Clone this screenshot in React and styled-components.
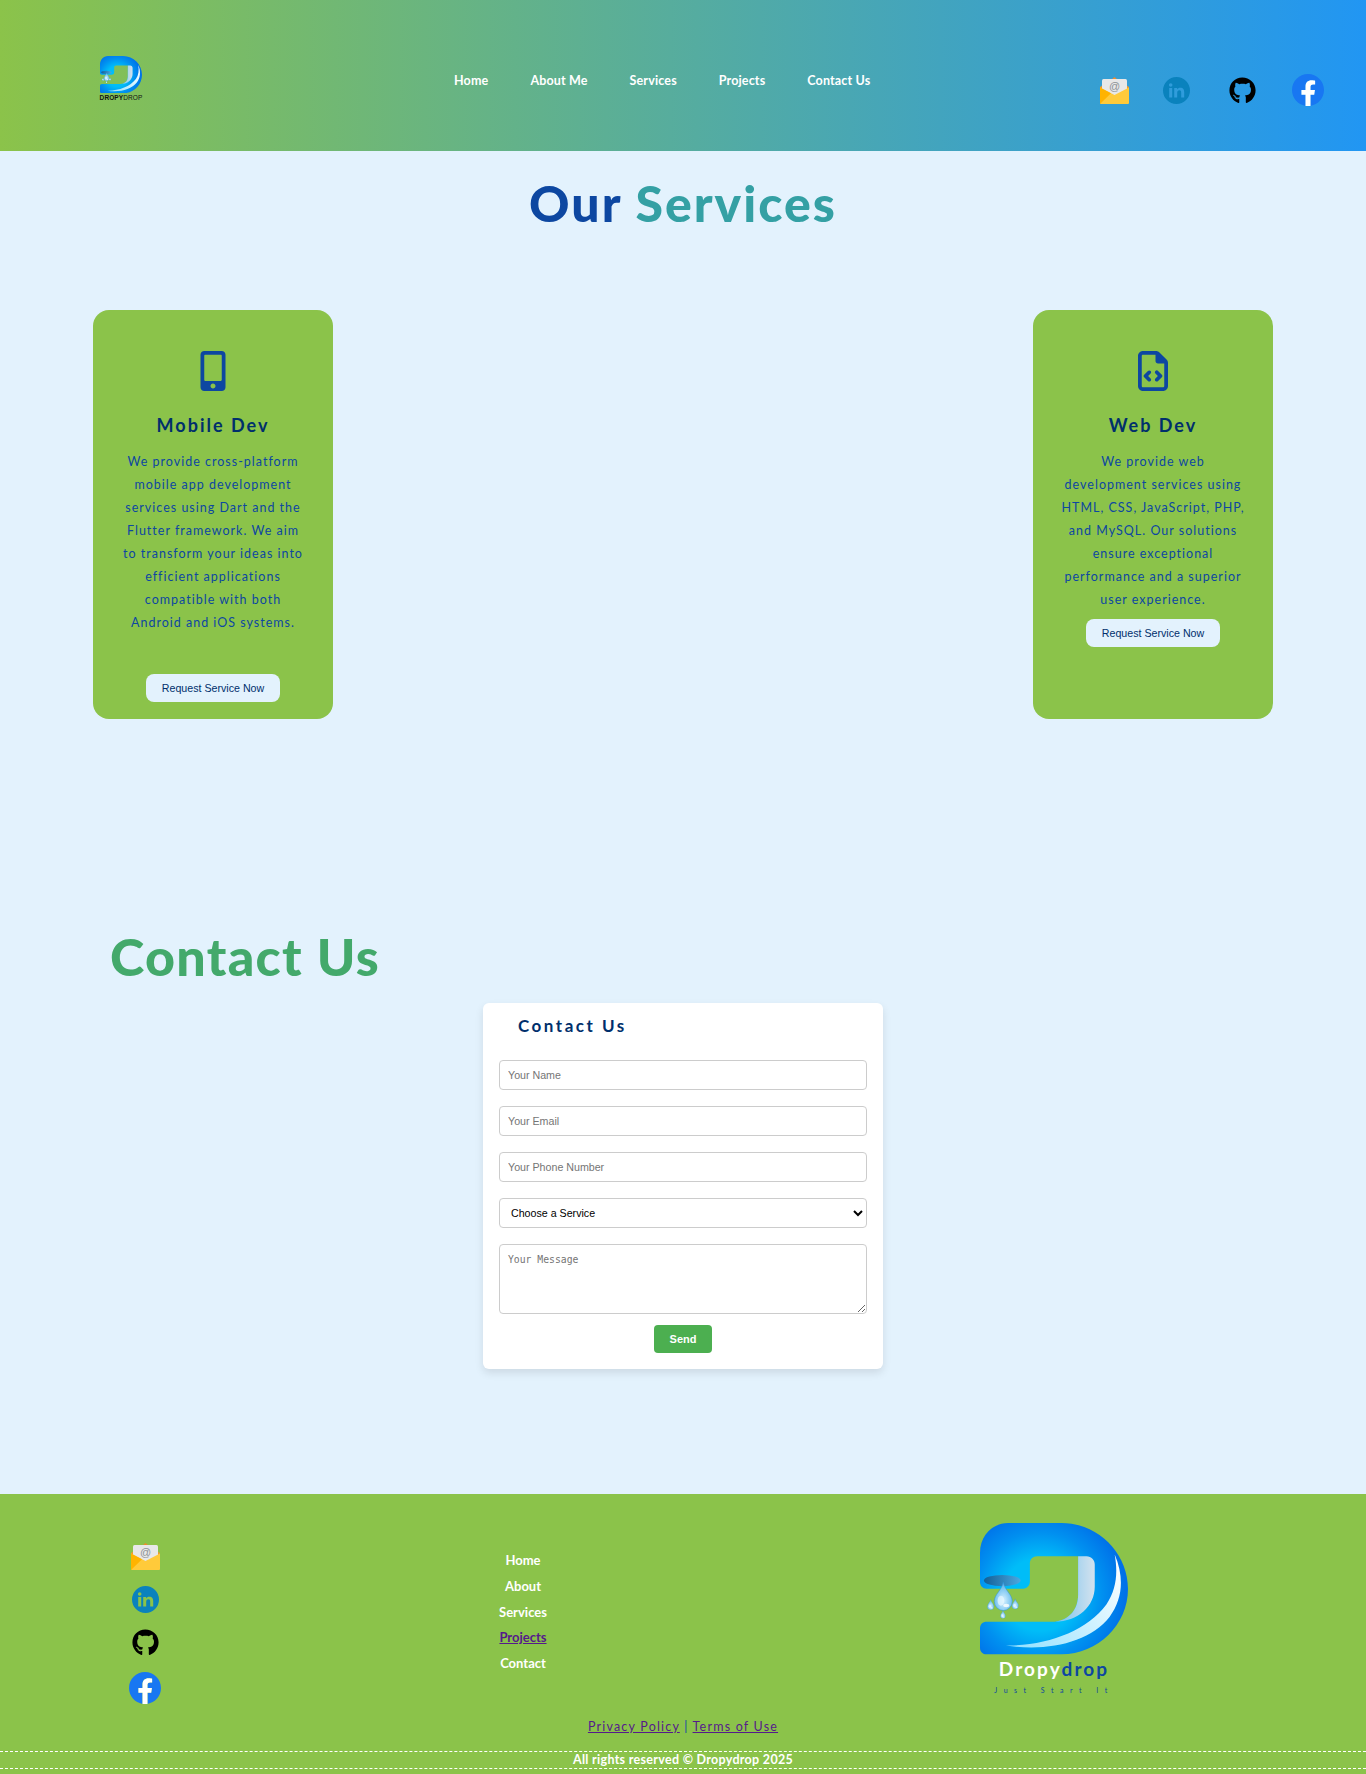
import React from 'react'
import styled, { createGlobalStyle } from 'styled-components'
import { FaGithub, FaMobileAlt } from 'react-icons/fa'
import { FaRegFileCode } from 'react-icons/fa6'

const GlobalStyle = createGlobalStyle`
  body {
    margin: 0;
    background: #e3f2fd;
    font-family: Lato, "Open Sans", sans-serif;
  }
  * { box-sizing: border-box; }
`

const MailIcon = () => (
  <svg width="29" height="27" viewBox="0 0 29 27">
    <path d="M14.5 0l3 2.5h-6z" fill="#ef8a2e" />
    <path d="M0 10l3-2h23l3 2v16H0z" fill="#ef9a2e" />
    <rect x="2" y="2" width="25" height="18" rx="1.5" fill="#e8e8e8" />
    <text x="14.5" y="13" textAnchor="middle" fontSize="11" fill="#8d9296" fontFamily="Liberation Sans">@</text>
    <path d="M0 10.5l14.5 7.5 14.5-7.5V26a1 1 0 0 1-1 1H1a1 1 0 0 1-1-1z" fill="#ffca3a" />
    <path d="M0 10.5l11 5.7L0 27z" fill="#ffb300" />
  </svg>
)

const LinkedinIcon = () => (
  <svg width="27" height="27" viewBox="0 0 27 27">
    <path
      fillRule="evenodd"
      fill="#0a82bd"
      d="M13.5 0a13.5 13.5 0 1 0 0 27 13.5 13.5 0 0 0 0-27zM6.2 11h3v9.5h-3zM7.7 6.2a1.8 1.8 0 1 1 0 3.6 1.8 1.8 0 0 1 0-3.6zM11.2 11h2.9v1.4c.6-1 1.7-1.7 3.2-1.7 3 0 3.9 1.9 3.9 4.6v5.2h-3v-4.6c0-1.4-.3-2.6-1.8-2.6s-2.2 1.1-2.2 2.6v4.6h-3z"
    />
  </svg>
)

const FacebookIcon = () => (
  <svg width="32" height="32" viewBox="0 0 24 24">
    <path fill="#1877f2" d="M24 12.073c0-6.627-5.373-12-12-12s-12 5.373-12 12c0 5.99 4.388 10.954 10.125 11.854v-8.385H7.078v-3.47h3.047V9.43c0-3.007 1.792-4.669 4.533-4.669 1.312 0 2.686.235 2.686.235v2.953H15.83c-1.491 0-1.956.925-1.956 1.874v2.25h3.328l-.532 3.47h-2.796v8.385C19.612 23.027 24 18.062 24 12.073z" />
    <path fill="#fff" d="M16.671 15.543l.532-3.47h-3.328v-2.25c0-.949.465-1.874 1.956-1.874h1.513V4.996s-1.374-.235-2.686-.235c-2.741 0-4.533 1.662-4.533 4.669v2.642H7.078v3.47h3.047v8.385a12.1 12.1 0 003.75 0v-8.385z" />
  </svg>
)

const Drop = ({ x, y, s }) => (
  <g transform={`translate(${x} ${y}) scale(${s})`}>
    <path d="M0-50C4-26 27-14 27 8a27 27 0 0 1-54 0C-27-14-4-26 0-50z" fill="url(#dropFill)" stroke="#2f93d8" strokeWidth="1.5" />
    <ellipse cx="-7" cy="6" rx="10" ry="15" fill="#e6f7ff" opacity="0.75" />
    <ellipse cx="9" cy="20" rx="9" ry="5" fill="#fff" opacity="0.8" />
  </g>
)

const LogoMark = ({ width }) => (
  <svg width={width} viewBox="120 70 445 396">
    <defs>
      <radialGradient id="logoFill" cx="300" cy="285" r="260" gradientUnits="userSpaceOnUse">
        <stop offset="0.42" stopColor="#00bdf8" />
        <stop offset="0.72" stopColor="#0090f0" />
        <stop offset="1" stopColor="#0070e8" />
      </radialGradient>
      <linearGradient id="panelFill" x1="350" y1="0" x2="465" y2="0" gradientUnits="userSpaceOnUse">
        <stop offset="0" stopColor="#78c4ee" />
        <stop offset="1" stopColor="#d4e2ee" />
      </linearGradient>
      <linearGradient id="shineFill" x1="200" y1="440" x2="530" y2="170" gradientUnits="userSpaceOnUse">
        <stop offset="0" stopColor="#8fe0ff" />
        <stop offset="1" stopColor="#ffffff" />
      </linearGradient>
      <linearGradient id="capFill" x1="132" y1="0" x2="242" y2="0" gradientUnits="userSpaceOnUse">
        <stop offset="0" stopColor="#135f96" />
        <stop offset="1" stopColor="#4aa8e0" />
      </linearGradient>
      <radialGradient id="dropFill" cx="0.5" cy="0.65" r="0.6">
        <stop offset="0" stopColor="#d8f2ff" />
        <stop offset="1" stopColor="#58b4ec" />
      </radialGradient>
    </defs>
    <path
      fill="url(#logoFill)"
      d="M120 160C120 110 155 70 205 70H365C475 70 565 160 565 268S475 465 365 465H140C128 465 120 457 120 445V387C120 375 128 367 140 367H335C385 367 415 335 415 285V170H292C279 170 270 179 270 192V245C270 259 260 268 247 268H140C128 268 120 259 120 247z"
    />
    <path fill="url(#panelFill)" d="M415 170H440C455 170 465 181 465 195V262C465 320 415 367 345 367C390 360 415 330 415 285z" />
    <path fill="url(#shineFill)" d="M525 165C555 235 548 300 510 352C450 430 320 458 198 438C320 440 440 395 500 315C530 270 535 220 525 165z" />
    <ellipse cx="187" cy="243" rx="55" ry="17" fill="url(#capFill)" />
    <Drop x={190} y={298} s={1} />
    <Drop x={152} y={318} s={0.36} />
    <Drop x={226} y={316} s={0.36} />
    <Drop x={189} y={347} s={0.28} />
  </svg>
)

const Contact = () => {
  return (
    <ContactSection>
      <ContactHeading>Contact Us</ContactHeading>
      <ContactForm onSubmit={(e) => e.preventDefault()}>
        <FormTitle>Contact Us</FormTitle>
        <Field type="text" placeholder="Your Name" />
        <Field type="email" placeholder="Your Email" />
        <Field type="tel" placeholder="Your Phone Number" />
        <ServiceSelect defaultValue="">
          <option value="">Choose a Service</option>
          <option value="mobile">Mobile Dev</option>
          <option value="web">Web Dev</option>
        </ServiceSelect>
        <Message placeholder="Your Message" />
        <SendButton type="submit">Send</SendButton>
      </ContactForm>
    </ContactSection>
  )
}

const App = () => {
  return (
    <>
      <GlobalStyle />
      <Header>
        <HeaderLogo>
          <LogoMark width={42} />
          <HeaderLogoText>DROPY<span>DROP</span></HeaderLogoText>
        </HeaderLogo>
        <Nav>
          <NavLink href="#home">Home</NavLink>
          <NavLink href="#about">About Me</NavLink>
          <NavLink href="#services">Services</NavLink>
          <NavLink href="#projects">Projects</NavLink>
          <NavLink href="#contact">Contact Us</NavLink>
        </Nav>
        <HeaderSocials>
          <HeaderSocial href="#mail"><MailIcon /></HeaderSocial>
          <HeaderSocial href="#linkedin" $left={34}><LinkedinIcon /></HeaderSocial>
          <HeaderSocial href="#github" $left={39}><FaGithub size={27} color="#000" /></HeaderSocial>
          <HeaderSocial href="#facebook" $left={36}><FacebookIcon /></HeaderSocial>
        </HeaderSocials>
      </Header>

      <Services>
        <ServicesHeading>Our <span>Services</span></ServicesHeading>
        <CardRow>
          <Card>
            <CardIcon><FaMobileAlt size={40} /></CardIcon>
            <CardTitle>Mobile Dev</CardTitle>
            <CardText>
              We provide cross-platform<br />
              mobile app development<br />
              services using Dart and the<br />
              Flutter framework. We aim<br />
              to transform your ideas into<br />
              efficient applications<br />
              compatible with both<br />
              Android and iOS systems.
            </CardText>
            <RequestButton $top={40}>Request Service Now</RequestButton>
          </Card>
          <Card>
            <CardIcon><FaRegFileCode size={40} /></CardIcon>
            <CardTitle>Web Dev</CardTitle>
            <CardText>
              We provide web<br />
              development services using<br />
              HTML, CSS, JavaScript, PHP,<br />
              and MySQL. Our solutions<br />
              ensure exceptional<br />
              performance and a superior<br />
              user experience.
            </CardText>
            <RequestButton $top={8}>Request Service Now</RequestButton>
          </Card>
        </CardRow>
      </Services>

      <Contact />

      <Footer>
        <FooterTop>
          <FooterSocials>
            <FooterSocial href="#mail"><MailIcon /></FooterSocial>
            <FooterSocial href="#linkedin"><LinkedinIcon /></FooterSocial>
            <FooterSocial href="#github"><FaGithub size={27} color="#000" /></FooterSocial>
            <FooterSocial href="#facebook"><FacebookIcon /></FooterSocial>
          </FooterSocials>
          <FooterNav>
            <FooterLink href="#home">Home</FooterLink>
            <FooterLink href="#about">About</FooterLink>
            <FooterLink href="#services">Services</FooterLink>
            <FooterLink href="#projects" $visited>Projects</FooterLink>
            <FooterLink href="#contact">Contact</FooterLink>
          </FooterNav>
          <FooterLogo>
            <LogoMark width={148} />
            <Brand>Dropy<span>drop</span></Brand>
            <Tagline>Just Start It</Tagline>
          </FooterLogo>
        </FooterTop>
        <Legal>
          <LegalLink href="#privacy">Privacy Policy</LegalLink> | <LegalLink href="#terms">Terms of Use</LegalLink>
        </Legal>
        <Copyright>All rights reserved © Dropydrop 2025</Copyright>
      </Footer>
    </>
  )
}

const Header = styled.header`
  height: 151px;
  display: flex;
  background: linear-gradient(90deg, #8bc34a, #2196f3);
  padding: 0 42px 0 99px;
`
const HeaderLogo = styled.div`
  width: 44px;
  padding-top: 56px;
  display: flex;
  flex-direction: column;
  align-items: center;
  svg { display: block; }
`
const HeaderLogoText = styled.div`
  margin-top: 1px;
  font: 700 6.5px/8px "Liberation Sans", sans-serif;
  letter-spacing: 0.1px;
  color: #111;
  span { font-weight: 400; }
`
const Nav = styled.nav`
  display: flex;
  gap: 42px;
  margin-left: 311px;
  padding-top: 72px;
`
const NavLink = styled.a`
  font-size: 12.5px;
  line-height: 18px;
  font-weight: 700;
  letter-spacing: 0.15px;
  color: #fff;
  text-decoration: none;
`
const HeaderSocials = styled.div`
  display: flex;
  margin-left: auto;
  align-items: center;
  height: 32px;
  margin-top: 74px;
`
const HeaderSocial = styled.a`
  display: flex;
  margin-left: ${(p) => p.$left || 0}px;
  svg { display: block; }
`
const Services = styled.section`
  padding-top: 19px;
`
const ServicesHeading = styled.h1`
  margin: 0;
  text-align: center;
  font-size: 50px;
  line-height: 66px;
  font-weight: 900;
  letter-spacing: 2px;
  color: #0d47a1;
  span { color: #34a0a4; }
`
const CardRow = styled.div`
  display: flex;
  justify-content: space-between;
  margin-top: 74px;
  padding: 0 93px;
`
const Card = styled.article`
  width: 240px;
  height: 409px;
  padding-top: 41px;
  border-radius: 16px;
  background: #8bc34a;
  display: flex;
  flex-direction: column;
  align-items: center;
  text-align: center;
`
const CardIcon = styled.div`
  height: 40px;
  color: #0d47a1;
  svg { display: block; }
`
const CardTitle = styled.h3`
  margin: 21px 0 0;
  font-size: 18px;
  line-height: 26px;
  font-weight: 700;
  letter-spacing: 2px;
  color: #002f6c;
`
const CardText = styled.p`
  margin: 12px 0 0;
  font-size: 12.5px;
  line-height: 23px;
  letter-spacing: 1px;
  white-space: nowrap;
  color: #0d47a1;
`
const RequestButton = styled.button`
  margin-top: ${(p) => p.$top}px;
  width: 134px;
  height: 28px;
  padding: 0;
  border: none;
  border-radius: 8px;
  background: #e3f2fd;
  color: #002f6c;
  font: 10.67px "Liberation Sans", Arial, sans-serif;
`
const ContactSection = styled.section`
  margin-top: 204px;
`
const ContactHeading = styled.h1`
  margin: 0;
  padding-left: 110px;
  font-size: 52px;
  line-height: 66px;
  font-weight: 900;
  letter-spacing: 1.3px;
  color: #43a96b;
`
const ContactForm = styled.form`
  width: 400px;
  margin: 14px auto 0;
  padding: 11px 16px 16px;
  background: #fff;
  border-radius: 6px;
  box-shadow: 0 4px 8px rgba(0, 0, 0, 0.1);
  display: flex;
  flex-direction: column;
`
const FormTitle = styled.h3`
  margin: 0 0 22px;
  padding-left: 19px;
  font-size: 17px;
  line-height: 24px;
  font-weight: 700;
  letter-spacing: 2.5px;
  color: #002f6c;
`
const Field = styled.input`
  height: 30px;
  margin-bottom: 16px;
  padding: 0 8px;
  border: 1px solid #ccc;
  border-radius: 4px;
  font: 10.67px "Liberation Sans", Arial, sans-serif;
  background: #fff;
`
const ServiceSelect = styled.select`
  height: 30px;
  margin-bottom: 16px;
  padding: 0 0 0 7px;
  border: 1px solid #ccc;
  border-radius: 4px;
  background: #fff;
  color: #000;
  font: 10.67px "Liberation Sans", Arial, sans-serif;
`
const Message = styled.textarea`
  height: 70px;
  padding: 9px 8px;
  border: 1px solid #ccc;
  border-radius: 4px;
  font: 9.75px "DejaVu Sans Mono", "Liberation Mono", monospace;
`
const SendButton = styled.button`
  align-self: center;
  width: 58px;
  height: 28px;
  margin-top: 11px;
  padding: 0;
  border: none;
  border-radius: 4px;
  background: #4caf50;
  color: #fff;
  font: 700 11px "Liberation Sans", Arial, sans-serif;
`
const Footer = styled.footer`
  margin-top: 125px;
  height: 280px;
  padding-top: 29px;
  background: #8bc34a;
`
const FooterTop = styled.div`
  height: 172px;
  display: flex;
  align-items: flex-start;
  padding-left: 129px;
`
const FooterSocials = styled.div`
  width: 32px;
  margin-top: 20px;
  display: flex;
  flex-direction: column;
  align-items: center;
  gap: 16px;
`
const FooterSocial = styled.a`
  display: flex;
  svg { display: block; }
`
const FooterNav = styled.nav`
  width: 100px;
  margin: 25px 0 0 312px;
  display: flex;
  flex-direction: column;
  align-items: center;
`
const FooterLink = styled.a`
  font-size: 13px;
  line-height: 25.8px;
  font-weight: 700;
  color: ${(p) => (p.$visited ? '#551a8b' : '#fff')};
  text-decoration: ${(p) => (p.$visited ? 'underline' : 'none')};
`
const FooterLogo = styled.div`
  width: 148px;
  margin-left: 407px;
  display: flex;
  flex-direction: column;
  align-items: center;
  svg { display: block; }
`
const Brand = styled.div`
  margin-top: 2px;
  font-size: 19px;
  line-height: 24px;
  font-weight: 700;
  letter-spacing: 2.1px;
  color: #fff;
  span { color: #0d47a1; }
`
const Tagline = styled.div`
  margin-top: 4px;
  font-size: 7px;
  line-height: 10px;
  letter-spacing: 6.5px;
  color: #0d47a1;
`
const Legal = styled.div`
  margin-top: 24px;
  text-align: center;
  font-size: 12.5px;
  line-height: 16px;
  letter-spacing: 1.2px;
  color: #0d47a1;
`
const LegalLink = styled.a`
  color: #551a8b;
  text-decoration: underline;
`
const Copyright = styled.div`
  height: 18px;
  margin-top: 16px;
  border-top: 1px dashed #fff;
  border-bottom: 1px dashed #fff;
  text-align: center;
  font-size: 12.5px;
  line-height: 16px;
  font-weight: 700;
  letter-spacing: 0.3px;
  color: #fff;
`

export default App
